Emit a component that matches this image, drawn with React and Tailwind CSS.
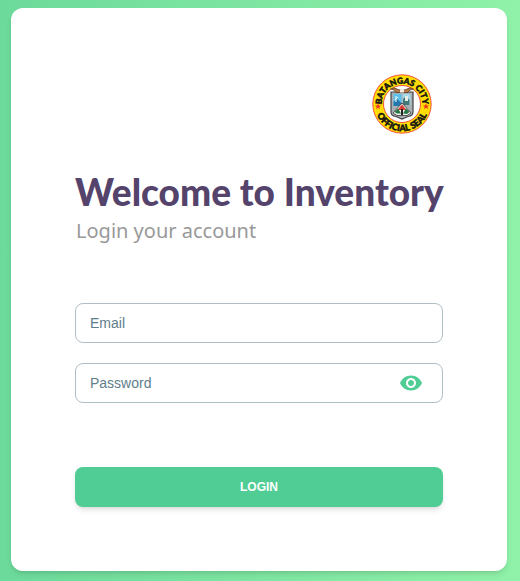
import { useState } from "react";
import { MdVisibility, MdVisibilityOff } from "react-icons/md";

const star = "M0 -3.2 L0.8 -1 L3.1 -1 L1.3 0.4 L2 2.7 L0 1.3 L-2 2.7 L-1.3 0.4 L-3.1 -1 L-0.8 -1 Z";

function CitySeal() {
  return (
    <svg viewBox="0 0 60 60" className="size-15" role="img" aria-label="Batangas City official seal">
      <defs>
        <path id="seal-top" d="M10.5 36 A20.4 20.4 0 1 1 49.5 36" />
        <path id="seal-bottom" d="M2.8 30 A27.2 27.2 0 0 0 57.2 30" />
      </defs>
      <circle cx="30" cy="30" r="29.2" fill="#ffde05" stroke="#f0433a" strokeWidth="0.9" />
      <circle cx="30" cy="30" r="18.5" fill="#fff" stroke="#f0433a" strokeWidth="0.9" />
      <g
        fill="#111"
        stroke="#111"
        strokeWidth="0.5"
        fontFamily="Lato, sans-serif"
        fontWeight="900"
        textAnchor="middle"
      >
        <text fontSize="8.4"><textPath href="#seal-top" startOffset="50%">BATANGAS CITY</textPath></text>
        <text fontSize="9"><textPath href="#seal-bottom" startOffset="50%">OFFICIAL SEAL</textPath></text>
      </g>
      <path d={star} fill="#ee3424" transform="translate(6 32.5)" />
      <path d={star} fill="#ee3424" transform="translate(54 32.5)" />
      <path d="M19 18 H41 V38 Q41 42 36 42.5 L30 45 L24 42.5 Q19 42 19 38 Z" fill="#a9b0b3" stroke="#444" strokeWidth="1.2" />
      <path d="M21.5 20 H29.5 V31 H21.5 Z" fill="#58c1ec" />
      <path d="M30.5 20 H38.5 V31 H30.5 Z" fill="#a8d9e8" />
      <path d="M21.5 28 L25 25 L29.5 29 V32 H21.5 Z" fill="#2477ac" />
      <path d="M24 22 V28 M26 23 L23 26" stroke="#fff" strokeWidth="1" />
      <path d="M31 31 V25 L34 22 L37.5 26 V31 Z" fill="#407a77" />
      <path d="M33 22 H36 V27 H33 Z" fill="#e9efe9" />
      <path d="M21 39 L30 29 L39 39 L35 41.5 H25 Z" fill="#f4f4ee" stroke="#333" strokeWidth="0.8" />
      <path d="M30 30.5 L34.5 36 H25.5 Z" fill="#d83c32" />
      <path d="M22.5 38 L26 34.5 L29 39.5 H25 Z" fill="#257746" />
      <path d="M31 39.5 L34 34.5 L37.5 38 L35 40 Z" fill="#257746" />
      <path d="M29 35 H31 V41 H29 Z" fill="#222" />
      <path d="M18.5 15 Q22 12.5 26 15.5 L30 16.5 L34 15.5 Q38 12.5 41.5 15 L38 16 L36 18.5 H24 L22 16 Z" fill="#b77947" stroke="#54361f" strokeWidth="0.7" />
      <path d="M28 15.5 H32 V18.5 H28 Z" fill="#f4ede0" />
    </svg>
  );
}

const fieldClass =
  "block h-10 w-full rounded-lg border border-[#b0bec5] bg-white pl-3.5 font-['Liberation_Sans',Arial,sans-serif] text-sm text-[#455a64] outline-none placeholder:text-[#607d8b] placeholder:opacity-100 focus:border-[#50cd95]";

export default function App() {
  const [visible, setVisible] = useState(false);
  const Eye = visible ? MdVisibilityOff : MdVisibility;

  return (
    <div className="flex min-h-screen flex-col bg-linear-to-r from-[#6cda9b] to-[#90f2a8] pt-2 pr-[13px] pb-2.5 pl-[11px]">
      <main className="flex-1 rounded-xl bg-white px-16 pt-16 pb-16 shadow-md">
        <div className="flex justify-end pt-0.5 pr-[11px]">
          <CitySeal />
        </div>
        <h1 className="mt-9 font-['Lato_Black',Lato,sans-serif] text-[37px] leading-11 font-black whitespace-nowrap text-[#54436b]">
          Welcome to Inventory
        </h1>
        <p className="pl-px font-['Noto_Sans',sans-serif] text-xl leading-[34px] text-[#999]">Login your account</p>
        <form onSubmit={(e) => e.preventDefault()} className="mt-[55px]">
          <div className="space-y-5">
            <input type="email" aria-label="Email" placeholder="Email" className={fieldClass + " pr-3.5"} />
            <div className="relative">
              <input
                type={visible ? "text" : "password"}
                aria-label="Password"
                placeholder="Password"
                className={fieldClass + " pr-14"}
              />
              <button
                type="button"
                aria-label="Toggle password visibility"
                onClick={() => setVisible(!visible)}
                className="absolute inset-y-0 right-5 flex items-center text-[#50cd95]"
              >
                <Eye className="size-6" />
              </button>
            </div>
          </div>
          <button
            type="submit"
            className="mt-16 h-10 w-full rounded-lg bg-[#50cd95] font-['Liberation_Sans',Arial,sans-serif] text-xs font-bold text-white uppercase shadow-md"
          >
            Login
          </button>
        </form>
      </main>
    </div>
  );
}
